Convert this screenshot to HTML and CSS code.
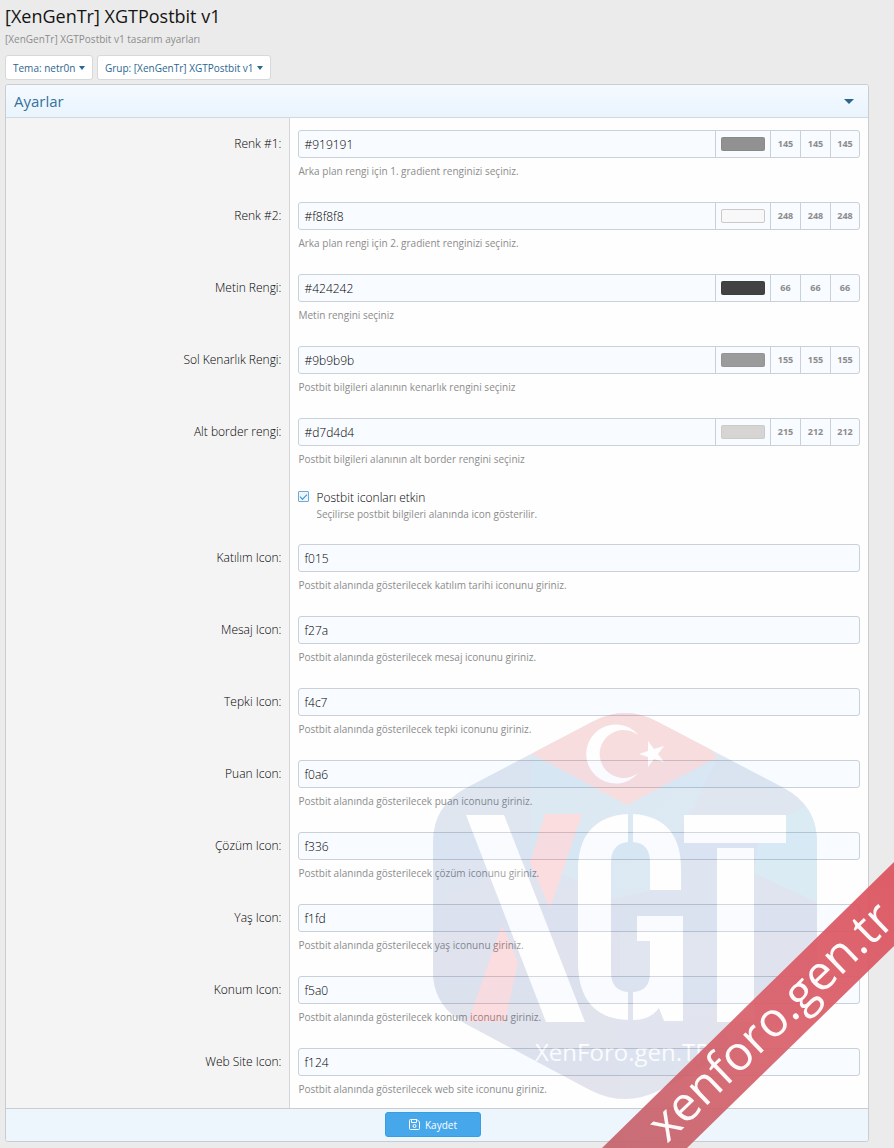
FILE: index.html
```html
<!DOCTYPE html>
<html lang="tr">
<head>
    <meta charset="UTF-8">
    <title>[XenGenTr] XGTPostbit v1</title>
    <link rel="stylesheet" href="styles.css">
</head>
<body>

<div class="page">
    <header class="page-header">
        <h1>[XenGenTr] XGTPostbit v1</h1>
        <p>[XenGenTr] XGTPostbit v1 tasarım ayarları</p>
    </header>

    <div class="filters">
        <button type="button" class="btn-menu">Tema: netr0n <span class="caret"></span></button>
        <button type="button" class="btn-menu">Grup: [XenGenTr] XGTPostbit v1 <span class="caret"></span></button>
    </div>

    <form class="block">
        <h2 class="block-header">Ayarlar <span class="caret caret-big"></span></h2>

        <div class="row">
            <label class="row-label" for="renk1">Renk #1:</label>
            <div class="row-main">
                <div class="color-group">
                    <input type="text" id="renk1" value="#919191">
                    <span class="swatch"><i style="background: #919191"></i></span>
                    <span class="rgb">145</span><span class="rgb">145</span><span class="rgb">145</span>
                </div>
                <p class="hint">Arka plan rengi için 1. gradient renginizi seçiniz.</p>
            </div>
        </div>

        <div class="row">
            <label class="row-label" for="renk2">Renk #2:</label>
            <div class="row-main">
                <div class="color-group">
                    <input type="text" id="renk2" value="#f8f8f8">
                    <span class="swatch swatch-light"><i style="background: #f8f8f8"></i></span>
                    <span class="rgb">248</span><span class="rgb">248</span><span class="rgb">248</span>
                </div>
                <p class="hint">Arka plan rengi için 2. gradient renginizi seçiniz.</p>
            </div>
        </div>

        <div class="row">
            <label class="row-label" for="metin">Metin Rengi:</label>
            <div class="row-main">
                <div class="color-group">
                    <input type="text" id="metin" value="#424242">
                    <span class="swatch"><i style="background: #424242"></i></span>
                    <span class="rgb">66</span><span class="rgb">66</span><span class="rgb">66</span>
                </div>
                <p class="hint">Metin rengini seçiniz</p>
            </div>
        </div>

        <div class="row">
            <label class="row-label" for="kenarlik">Sol Kenarlık Rengi:</label>
            <div class="row-main">
                <div class="color-group">
                    <input type="text" id="kenarlik" value="#9b9b9b">
                    <span class="swatch"><i style="background: #9b9b9b"></i></span>
                    <span class="rgb">155</span><span class="rgb">155</span><span class="rgb">155</span>
                </div>
                <p class="hint">Postbit bilgileri alanının kenarlık rengini seçiniz</p>
            </div>
        </div>

        <div class="row">
            <label class="row-label" for="border">Alt border rengi:</label>
            <div class="row-main">
                <div class="color-group">
                    <input type="text" id="border" value="#d7d4d4">
                    <span class="swatch"><i style="background: #d7d4d4"></i></span>
                    <span class="rgb">215</span><span class="rgb">212</span><span class="rgb">212</span>
                </div>
                <p class="hint">Postbit bilgileri alanının alt border rengini seçiniz</p>
            </div>
        </div>

        <div class="row row-check">
            <div class="row-label"></div>
            <div class="row-main">
                <input type="checkbox" id="etkin" checked>
                <div>
                    <label for="etkin">Postbit iconları etkin</label>
                    <p class="hint">Seçilirse postbit bilgileri alanında icon gösterilir.</p>
                </div>
            </div>
        </div>

        <div class="row">
            <label class="row-label" for="katilim">Katılım Icon:</label>
            <div class="row-main">
                <input type="text" id="katilim" value="f015">
                <p class="hint">Postbit alanında gösterilecek katılım tarihi iconunu giriniz.</p>
            </div>
        </div>

        <div class="row">
            <label class="row-label" for="mesaj">Mesaj Icon:</label>
            <div class="row-main">
                <input type="text" id="mesaj" value="f27a">
                <p class="hint">Postbit alanında gösterilecek mesaj iconunu giriniz.</p>
            </div>
        </div>

        <div class="row">
            <label class="row-label" for="tepki">Tepki Icon:</label>
            <div class="row-main">
                <input type="text" id="tepki" value="f4c7">
                <p class="hint">Postbit alanında gösterilecek tepki iconunu giriniz.</p>
            </div>
        </div>

        <div class="row">
            <label class="row-label" for="puan">Puan Icon:</label>
            <div class="row-main">
                <input type="text" id="puan" value="f0a6">
                <p class="hint">Postbit alanında gösterilecek puan iconunu giriniz.</p>
            </div>
        </div>

        <div class="row">
            <label class="row-label" for="cozum">Çözüm Icon:</label>
            <div class="row-main">
                <input type="text" id="cozum" value="f336">
                <p class="hint">Postbit alanında gösterilecek çözüm iconunu giriniz.</p>
            </div>
        </div>

        <div class="row">
            <label class="row-label" for="yas">Yaş Icon:</label>
            <div class="row-main">
                <input type="text" id="yas" value="f1fd">
                <p class="hint">Postbit alanında gösterilecek yaş iconunu giriniz.</p>
            </div>
        </div>

        <div class="row">
            <label class="row-label" for="konum">Konum Icon:</label>
            <div class="row-main">
                <input type="text" id="konum" value="f5a0">
                <p class="hint">Postbit alanında gösterilecek konum iconunu giriniz.</p>
            </div>
        </div>

        <div class="row">
            <label class="row-label" for="web">Web Site Icon:</label>
            <div class="row-main">
                <input type="text" id="web" value="f124">
                <p class="hint">Postbit alanında gösterilecek web site iconunu giriniz.</p>
            </div>
        </div>

        <div class="block-footer">
            <button type="submit" class="btn-save">
                <svg width="11" height="11" viewBox="0 0 11 11" fill="none" stroke="#fff">
                    <path d="M.5 1.5a1 1 0 0 1 1-1h6.500l2.500 2.500v6.500a1 1 0 0 1-1 1h-8a1 1 0 0 1-1-1z"/>
                    <path d="M2.500 .5v3h5v-3"/>
                    <circle cx="5.500" cy="7" r="1.500"/>
                </svg>
                Kaydet
            </button>
        </div>
    </form>
</div>

<!-- Filigran -->
<svg class="watermark" width="470" height="444" viewBox="424 704 470 444">
    <defs>
        <linearGradient id="shield" x1="0" y1="0" x2="0" y2="1">
            <stop offset="0" stop-color="#4f7fb0"/>
            <stop offset=".4" stop-color="#4a70b0"/>
            <stop offset="1" stop-color="#5f6aa0"/>
        </linearGradient>
        <linearGradient id="sky" x1="0" y1="0" x2="1" y2="1">
            <stop offset="0" stop-color="#2b86c4"/>
            <stop offset="1" stop-color="#3b9ac8"/>
        </linearGradient>
        <linearGradient id="ribbon" x1="0" y1="1" x2="1" y2="0">
            <stop offset="0" stop-color="#c4646d"/>
            <stop offset=".5" stop-color="#d9606a"/>
            <stop offset="1" stop-color="#dc525e"/>
        </linearGradient>
        <clipPath id="shape">
            <path d="M592 722Q625 704 658 722L784 788Q817 806 817 842V972Q817 1006 784 1025L660 1090Q625 1108 590 1090L466 1024Q433 1006 433 972V842Q433 806 466 788Z"/>
        </clipPath>
    </defs>
    <g opacity=".17">
        <g clip-path="url(#shape)">
            <rect x="433" y="704" width="384" height="404" fill="url(#shield)"/>
            <path d="M532 754L627 805L718 757L690 815L650 890L611 900L578 880L530 862Z" fill="url(#sky)" opacity=".6"/>
            <path d="M760 830L817 800V902L754 873Z" fill="#2f9ccb" opacity=".8"/>
            <path d="M433 905L500 870L620 900V1108H433Z" fill="#5a5590" opacity=".3"/>
            <path d="M754 876L817 904V1108H680Z" fill="#5a5590" opacity=".3"/>
            <path d="M532 754L592 700H658L718 757L627 805Z" fill="#dc434f"/>
        </g>
        <path d="M545 814H582L550 908L530 862ZM502 925L518 962L505 1022H468Z" fill="#ee434f"/>
        <g fill="#fff">
            <path d="M638.300 735A29.500 29.500 0 1 0 638.300 773A24 24 0 1 1 638.300 735Z"/>
            <path d="M639 754L648 751V741L654 749L664 746L658 754L664 762L654 759L648 767V757Z"/>
            <path d="M466 815H504L585 1022H546Z"/>
            <path d="M628 814C594 816 578 836 578 870V962C578 1000 596 1019 628 1020V992C617 991 611 985 611 972V862C611 850 617 843 628 842Z"/>
            <path d="M633 814C666 816 681 836 681 868V890H650V862C650 850 645 843 633 842Z"/>
            <path d="M637 916H683V1021H664L659 1008C653 1016 645 1020 633 1020V992C645 991 650 985 650 972V941H637Z"/>
            <path d="M684 815H786V843H684ZM717 848H754V1022H717Z"/>
            <text class="wm-small" x="535" y="1061">XenForo.gen.TR</text>
        </g>
    </g>
    <path d="M602 1148L894 862V946L687 1148Z" fill="url(#ribbon)" opacity=".93"/>
    <text class="wm-big" transform="translate(667 1144) rotate(-44)">xenforo.gen.tr</text>
</svg>

</body>
</html>
```
FILE: styles.css
```css
* { box-sizing: border-box; }
body {
    position: relative;
    min-height: 100vh;
    margin: 0;
    background-color: #ebebeb;
    color: #000;
    font-family: "Segoe UI", "Open Sans", "Noto Sans", sans-serif;
    font-size: 12px;
    font-weight: 300;
}
h1, h2, p { margin: 0; font-weight: 400; }
.page { padding: 3px 25px 6px 5px; }

.page-header h1 { color: #141414; font-size: 18px; line-height: 26px; }
.page-header p { padding-bottom: 1px; font-size: 10px; line-height: 20px; color: #8c8c8c; }

.filters { display: flex; gap: 4px; padding: 5px 0 4px; }
.btn-menu {
    height: 25px;
    padding: 0 7px;
    background-color: #fff;
    border: 1px solid #d8d8d8;
    border-radius: 3px;
    color: #2b6690;
    font-family: inherit;
    font-size: 10px;
    cursor: pointer;
}
.caret {
    display: inline-block;
    margin-left: 1px;
    border: 3px solid transparent;
    border-top: 4px solid #2b6690;
    border-bottom: 0;
    vertical-align: 2px;
}

.block {
    background-color: #fefefe;
    border: 1px solid #c9cdd2;
    border-radius: 3px;
}
.block-header {
    display: flex;
    align-items: center;
    justify-content: space-between;
    height: 33px;
    padding: 0 14px 0 8px;
    background-image: linear-gradient(#f5faff, #e9f4fd);
    border-bottom: 1px solid #d0d9e0;
    border-radius: 3px 3px 0 0;
    color: #35729e;
    font-size: 15px;
}
.caret-big { border-width: 5px 5px 0; }

.row { display: flex; min-height: 72px; }
.row-label {
    width: 33%;
    padding: 12px 8px 0 0;
    background-color: #f4f4f4;
    border-right: 1px solid #d5d5d5;
    line-height: 28px;
    text-align: right;
}
.row-main { flex: 1; padding: 12px 8px 0; }
.row input[type="text"] {
    display: block;
    width: 100%;
    height: 28px;
    padding: 0 5px;
    background-color: #f8fbff;
    border: 1px solid #c9d0d7;
    border-radius: 3px;
    color: #000;
    font-family: inherit;
    font-size: 12px;
    font-weight: 300;
}
.hint { padding-top: 3px; color: #8c8c8c; font-size: 10px; line-height: 20px; }

.color-group {
    display: flex;
    height: 28px;
    background-color: #f8fbff;
    border: 1px solid #c9d0d7;
    border-radius: 3px;
}
.color-group input[type="text"] { flex: 1; height: 26px; border: 0; }
.swatch { width: 55px; padding: 6px 5px; border-left: 1px solid #c9d0d7; }
.swatch i {
    display: block;
    height: 14px;
    border: 1px solid rgba(0, 0, 0, 0.05);
    border-radius: 2px;
}
.swatch-light i { border-color: #cbc8c8; }
.rgb {
    width: 30px;
    border-left: 1px solid #c9d0d7;
    color: #8c8c8c;
    font-size: 9px;
    font-weight: 700;
    line-height: 26px;
    text-align: center;
}
.rgb:last-child { width: 29px; }

.row-check { min-height: 54px; }
.row-check .row-main { display: flex; gap: 7px; }
.row-check label { display: block; line-height: 16px; }
.row-check .hint { padding: 0; line-height: 16px; }
.row-check input {
    appearance: none;
    width: 11px;
    height: 11px;
    margin: 1px 0 0;
    background-color: #edf6fd;
    border: 1px solid #6fa9d4;
    border-radius: 1px;
}
.row-check input:checked::before {
    content: "";
    display: block;
    width: 6px;
    height: 3px;
    margin: 2px auto 0;
    border: solid #3b8ec8;
    border-width: 0 0 1px 1px;
    transform: rotate(-45deg);
}

.block-footer {
    padding: 3px 8px 4px 0;
    background-color: #edf6fd;
    border-top: 1px solid #c9cdd2;
    border-radius: 0 0 3px 3px;
    text-align: center;
}
.btn-save {
    display: inline-flex;
    align-items: center;
    justify-content: center;
    gap: 5px;
    width: 96px;
    height: 25px;
    background-color: #47a7eb;
    border: 1px solid #3a9ce2;
    border-radius: 3px;
    color: #fff;
    font-family: inherit;
    font-size: 10px;
    vertical-align: top;
    cursor: pointer;
}

.watermark { position: absolute; right: 0; bottom: 0; pointer-events: none; }
.wm-small { font-size: 24px; font-weight: 400; }
.wm-big { font-size: 48px; font-weight: 400; fill: #fffafa; }
```
